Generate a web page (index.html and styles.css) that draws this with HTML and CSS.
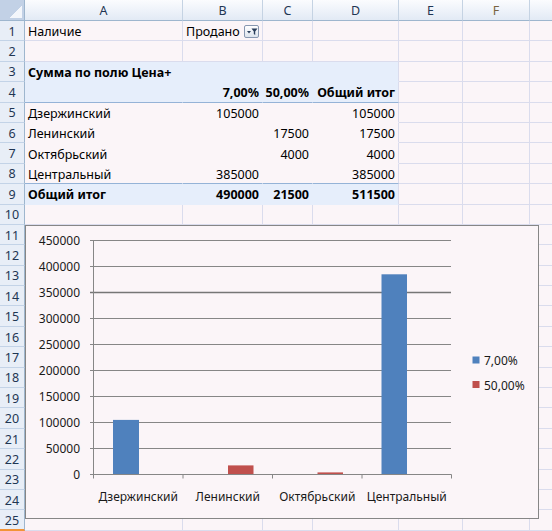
FILE: index.html
```html
<!DOCTYPE html>
<html lang="ru">
<head>
    <meta charset="UTF-8">
    <title>Сводная таблица</title>
    <link rel="stylesheet" href="styles.css">
</head>
<body>
<div class="sheet">
    <div class="row head"><div class="corner"></div><div class="ch">A</div><div class="ch">B</div><div class="ch">C</div><div class="ch">D</div><div class="ch">E</div><div class="ch act">F</div><div class="ch g"></div></div>
    <div class="row"><div class="rh">1</div><div class="c">Наличие</div><div class="c">Продано<span class="filter"><svg width="15" height="13" viewBox="0 0 15 13"><path d="M3 6h4l-2 2.5z" fill="#2b3f5c"/><path d="M7.5 3.5h6l-2.3 3v3.5l-1.4-1v-2.5z" fill="#2b3f5c"/></svg></span></div><div class="c"></div><div class="c"></div><div class="c"></div><div class="c"></div><div class="c g"></div></div>
    <div class="row"><div class="rh">2</div><div class="c"></div><div class="c"></div><div class="c"></div><div class="c"></div><div class="c"></div><div class="c"></div><div class="c g"></div></div>
    <div class="row"><div class="rh">3</div><div class="c pv b span4">Сумма по полю Цена+</div><div class="c"></div><div class="c"></div><div class="c g"></div></div>
    <div class="row"><div class="rh">4</div><div class="c pv line"></div><div class="c pv line num b">7,00%</div><div class="c pv line num b">50,00%</div><div class="c pv line last num b">Общий итог</div><div class="c"></div><div class="c"></div><div class="c g"></div></div>
    <div class="row"><div class="rh">5</div><div class="c pw">Дзержинский</div><div class="c pw num">105000</div><div class="c pw num"></div><div class="c pw last num">105000</div><div class="c"></div><div class="c"></div><div class="c g"></div></div>
    <div class="row"><div class="rh">6</div><div class="c pw">Ленинский</div><div class="c pw num"></div><div class="c pw num">17500</div><div class="c pw last num">17500</div><div class="c"></div><div class="c"></div><div class="c g"></div></div>
    <div class="row"><div class="rh">7</div><div class="c pw">Октябрьский</div><div class="c pw num"></div><div class="c pw num">4000</div><div class="c pw last num">4000</div><div class="c"></div><div class="c"></div><div class="c g"></div></div>
    <div class="row"><div class="rh">8</div><div class="c pw line">Центральный</div><div class="c pw line num">385000</div><div class="c pw line num"></div><div class="c pw line last num">385000</div><div class="c"></div><div class="c"></div><div class="c g"></div></div>
    <div class="row"><div class="rh">9</div><div class="c pv b">Общий итог</div><div class="c pv num b">490000</div><div class="c pv num b">21500</div><div class="c pv last num b">511500</div><div class="c"></div><div class="c"></div><div class="c g"></div></div>
    <div class="row"><div class="rh">10</div><div class="c"></div><div class="c"></div><div class="c"></div><div class="c"></div><div class="c"></div><div class="c"></div><div class="c g"></div></div>
    <div class="row"><div class="rh">11</div><div class="c"></div><div class="c"></div><div class="c"></div><div class="c"></div><div class="c"></div><div class="c"></div><div class="c g"></div></div>
    <div class="row"><div class="rh">12</div><div class="c"></div><div class="c"></div><div class="c"></div><div class="c"></div><div class="c"></div><div class="c"></div><div class="c g"></div></div>
    <div class="row"><div class="rh">13</div><div class="c"></div><div class="c"></div><div class="c"></div><div class="c"></div><div class="c"></div><div class="c"></div><div class="c g"></div></div>
    <div class="row"><div class="rh">14</div><div class="c"></div><div class="c"></div><div class="c"></div><div class="c"></div><div class="c"></div><div class="c"></div><div class="c g"></div></div>
    <div class="row"><div class="rh">15</div><div class="c"></div><div class="c"></div><div class="c"></div><div class="c"></div><div class="c"></div><div class="c"></div><div class="c g"></div></div>
    <div class="row"><div class="rh">16</div><div class="c"></div><div class="c"></div><div class="c"></div><div class="c"></div><div class="c"></div><div class="c"></div><div class="c g"></div></div>
    <div class="row"><div class="rh">17</div><div class="c"></div><div class="c"></div><div class="c"></div><div class="c"></div><div class="c"></div><div class="c"></div><div class="c g"></div></div>
    <div class="row"><div class="rh">18</div><div class="c"></div><div class="c"></div><div class="c"></div><div class="c"></div><div class="c"></div><div class="c"></div><div class="c g"></div></div>
    <div class="row"><div class="rh">19</div><div class="c"></div><div class="c"></div><div class="c"></div><div class="c"></div><div class="c"></div><div class="c"></div><div class="c g"></div></div>
    <div class="row"><div class="rh">20</div><div class="c"></div><div class="c"></div><div class="c"></div><div class="c"></div><div class="c"></div><div class="c"></div><div class="c g"></div></div>
    <div class="row"><div class="rh">21</div><div class="c"></div><div class="c"></div><div class="c"></div><div class="c"></div><div class="c"></div><div class="c"></div><div class="c g"></div></div>
    <div class="row"><div class="rh">22</div><div class="c"></div><div class="c"></div><div class="c"></div><div class="c"></div><div class="c"></div><div class="c"></div><div class="c g"></div></div>
    <div class="row"><div class="rh">23</div><div class="c"></div><div class="c"></div><div class="c"></div><div class="c"></div><div class="c"></div><div class="c"></div><div class="c g"></div></div>
    <div class="row"><div class="rh">24</div><div class="c"></div><div class="c"></div><div class="c"></div><div class="c"></div><div class="c"></div><div class="c"></div><div class="c g"></div></div>
    <div class="row"><div class="rh sel">25</div><div class="c"></div><div class="c"></div><div class="c"></div><div class="c"></div><div class="c"></div><div class="c"></div><div class="c g"></div></div>

    <!-- диаграмма поверх ячеек -->
    <div class="chart">
        <svg width="512" height="292" viewBox="0 0 512 292">
            <g class="grid">
                <path d="M64 14.5H425M64 40.5H425M64 92.5H425M64 118.5H425M64 144.5H425M64 170.5H425M64 196.5H425M64 222.5H425"/>
                <path class="thick" d="M64 66.5H425"/>
            </g>
            <rect x="87" y="193.9" width="26" height="54.6" fill="#4f81bd"/>
            <rect x="202" y="239.4" width="25.5" height="9.1" fill="#c0504d"/>
            <rect x="291.5" y="246.4" width="25.5" height="2.1" fill="#c0504d"/>
            <rect x="355.5" y="48.3" width="25.5" height="200.2" fill="#4f81bd"/>
            <g class="grid">
                <path d="M67.5 14.5V252.5M64 248.5H425.5M157 248.5V252.5M246.5 248.5V252.5M336 248.5V252.5M425.5 248.5V252.5"/>
            </g>
            <g class="ylab">
                <text x="54" y="14.5">450000</text>
                <text x="54" y="40.5">400000</text>
                <text x="54" y="66.5">350000</text>
                <text x="54" y="92.5">300000</text>
                <text x="54" y="118.5">250000</text>
                <text x="54" y="144.5">200000</text>
                <text x="54" y="170.5">150000</text>
                <text x="54" y="196.5">100000</text>
                <text x="54" y="222.5">50000</text>
                <text x="54" y="248.5">0</text>
            </g>
            <g class="xlab">
                <text x="112.25" y="270">Дзержинский</text>
                <text x="201.75" y="270">Ленинский</text>
                <text x="291.25" y="270">Октябрьский</text>
                <text x="380.75" y="270">Центральный</text>
            </g>
            <rect x="446.5" y="130.5" width="7" height="7" fill="#4f81bd"/>
            <text class="leg" x="458" y="134.5">7,00%</text>
            <rect x="446.5" y="155" width="7" height="7" fill="#c0504d"/>
            <text class="leg" x="458" y="159">50,00%</text>
        </svg>
    </div>
</div>
</body>
</html>
```

FILE: styles.css
```css
body {
    margin: 0;
    font-family: "Noto Sans", "Liberation Sans", sans-serif;
    font-size: 12.5px;
    color: #000;
    background: #fbf5f8;
    overflow: hidden;
}
.sheet {
    position: relative;
    width: 552px;
    height: 531px;
    overflow: hidden;
}
.row {
    display: grid;
    grid-template-columns: 25px 158px 80px 50px 86px 64px 67px 22px;
    height: 20.4px;
}
.row.head {
    height: 21px;
}
.c {
    box-sizing: border-box;
    border-right: 1px solid #dadced;
    border-bottom: 1px solid #dadced;
    padding: 2px 3px 0;
    display: flex;
    align-items: center;
    white-space: nowrap;
    min-width: 0;
}
.c.g {
    border-right: none;
}
.num {
    justify-content: flex-end;
}
.b {
    font-weight: bold;
}
.span4 {
    grid-column: span 4;
}
.pv {
    background: #e6eefb;
    border-right-color: #e6eefb;
    border-bottom-color: #e6eefb;
}
.pw {
    border-right-color: transparent;
    border-bottom-color: transparent;
}
.pv.span4, .last {
    border-right-color: #dadced;
}
.line {
    border-bottom-color: #95b3d7;
}
.rh {
    box-sizing: border-box;
    background: #e8eef7;
    border-right: 1px solid #9eb6ce;
    border-bottom: 1px solid #c3d3e7;
    display: flex;
    align-items: center;
    justify-content: center;
    padding-top: 1px;
    color: #1f3653;
}
.rh.sel {
    border-bottom: 2px solid #f29436;
}
.ch {
    box-sizing: border-box;
    background: linear-gradient(#fbfcfe, #e2eaf5);
    border-right: 1px solid #c5d3e3;
    border-bottom: 1px solid #9eb6ce;
    display: flex;
    align-items: center;
    justify-content: center;
    color: #1f3653;
}
.ch.act {
    color: #7a6440;
}
.ch.g {
    border-right: none;
}
.corner {
    box-sizing: border-box;
    border-right: 1px solid #9eb6ce;
    border-bottom: 1px solid #9eb6ce;
    background: linear-gradient(to bottom right, transparent 50%, #f3f6fb 50%) no-repeat right 2px bottom 2px / 13px 13px, #c2d1e6;
}
.filter {
    display: inline-block;
    box-sizing: border-box;
    width: 15px;
    height: 13px;
    margin-left: 4px;
    border: 1px solid #8797b0;
    border-radius: 2px;
    background: linear-gradient(#ffffff, #dde4ee);
    line-height: 0;
}
.filter svg {
    margin: -1px 0 0 -1px;
}
.chart {
    position: absolute;
    left: 25px;
    top: 225px;
    width: 514px;
    height: 294px;
    box-sizing: border-box;
    border: 1px solid #868686;
    background: #fbf5f8;
}
.chart svg {
    display: block;
}
.chart text {
    font-family: "Noto Sans", "Liberation Sans", sans-serif;
    font-size: 12px;
    fill: #1a1a1a;
    dominant-baseline: central;
}
.grid path {
    stroke: #868686;
    stroke-width: 1;
    fill: none;
}
.grid path.thick {
    stroke: #767676;
    stroke-width: 1.6;
}
.ylab text {
    text-anchor: end;
}
.xlab text {
    text-anchor: middle;
}
```
